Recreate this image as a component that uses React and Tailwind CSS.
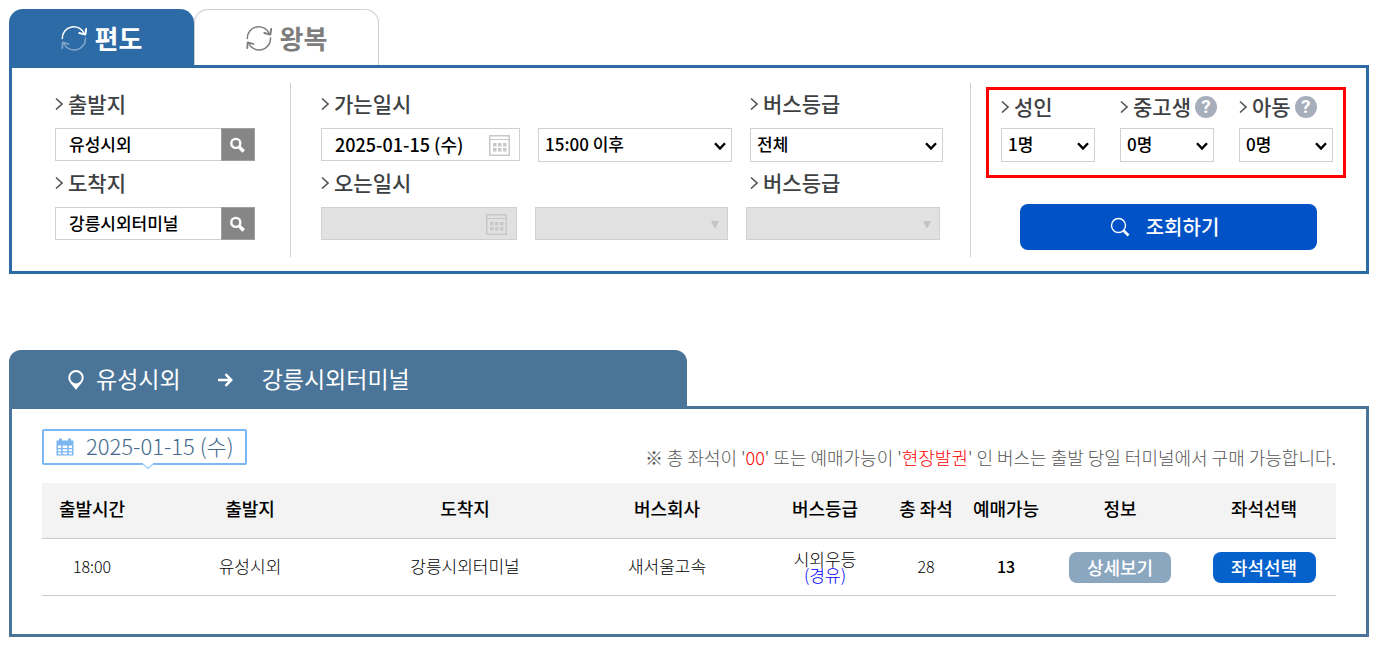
import React from "react";

const FONT = "font-['Noto_Sans_CJK_KR','Noto_Sans',sans-serif]";

function RoundTripIcon({ lowerOpacity }) {
  return (
    <svg width="26" height="26" viewBox="0 0 26 26" fill="none" stroke="currentColor" strokeLinecap="round" strokeLinejoin="round" aria-hidden="true">
      <path d="M1.3 13.500A11.500 11.500 0 0 1 23.500 9" strokeWidth="1.5" />
      <path d="M18.300 8 24.300 9.600 25.200 4" strokeWidth="2" />
      <g opacity={lowerOpacity}>
        <path d="M24.500 13A11.400 11.400 0 0 1 2.500 17.800" strokeWidth="1.5" />
        <path d="M7.600 19 1.700 17.300 1.300 23" strokeWidth="1.8" />
      </g>
    </svg>
  );
}

function Heading({ children, htmlFor }) {
  return (
    <label htmlFor={htmlFor} className="flex h-6 items-center gap-[5px] pb-[2px] text-[21px] leading-6 font-medium whitespace-nowrap text-[#3e4143]">
      <svg width="8" height="14" viewBox="0 0 8 14" fill="none" stroke="#555" strokeWidth="1.6" aria-hidden="true">
        <path d="M1 2.500 7 8 1 13.500" />
      </svg>
      {children}
    </label>
  );
}

function PlaceField({ id, label, value }) {
  return (
    <div className="flex flex-col gap-3">
      <Heading htmlFor={id}>{label}</Heading>
      <div className="flex h-[33px]">
        <input id={id} type="text" defaultValue={value} className="w-[166px] border border-r-0 border-[#d0d0d0] bg-white pb-[2px] pl-[13px] text-[17px] leading-6 font-medium text-black" />
        <button type="button" aria-label={`${label} 검색`} className="flex flex-1 items-center justify-center border border-[#a0a0a0] bg-[#868686]">
          <svg width="18" height="18" viewBox="0 0 18 18" fill="none" stroke="#fff" aria-hidden="true">
            <circle cx="6.800" cy="7.400" r="4.5" strokeWidth="2.4" />
            <path d="m10.500 11.200 4.2 4.2" strokeWidth="3.6" />
          </svg>
        </button>
      </div>
    </div>
  );
}

function CalendarIcon() {
  return (
    <svg width="21" height="21" viewBox="0 0 21 21" fill="none" stroke="#c8c8c8" aria-hidden="true">
      <rect x=".75" y=".75" width="19.5" height="19.5" strokeWidth="1.5" />
      <path d="M1 4.5h19" />
      <g fill="#c8c8c8" stroke="none">
        <path d="M4 8h3.500v3.500H4zM9 8h3.500v3.500H9zM14 8h3.500v3.500H14zM4 13h3.500v3.500H4zM9 13h3.500v3.500H9zM14 13h3.500v3.500H14z" />
      </g>
    </svg>
  );
}

function DateField({ id, value, disabled, box }) {
  return (
    <div className={`flex h-[33px] items-center border border-[#d0d0d0] ${box}`}>
      <input id={id} type="text" defaultValue={value} disabled={disabled} className="h-full min-w-0 flex-1 bg-transparent pb-[2px] pl-[13px] text-[18px] leading-6 font-medium text-black" />
      <button type="button" aria-label="달력 열기" disabled={disabled} className="pt-[2px] pr-[9px]">
        <CalendarIcon />
      </button>
    </div>
  );
}

function Select({ id, label, options, box }) {
  return (
    <div className={`relative flex h-[34px] ${box}`}>
      <select id={id} aria-label={label} className="w-full appearance-none border border-[#d0d0d0] bg-white pr-6 pb-[2px] pl-[6px] text-[17px] leading-6 font-medium text-black">
        {options.map((o) => (
          <option key={o}>{o}</option>
        ))}
      </select>
      <svg className="pointer-events-none absolute top-[14px] right-[6px]" width="12" height="9" viewBox="0 0 12 9" fill="none" stroke="#000" strokeWidth="2.400" aria-hidden="true">
        <path d="M1 1.200 6 6.500l5-5.300" />
      </svg>
    </div>
  );
}

function DisabledSelect({ id, label, box }) {
  return (
    <div className={`relative flex h-[33px] ${box}`}>
      <select id={id} aria-label={label} disabled className="w-full appearance-none border border-[#d0d0d0] bg-[#e1e1e1] opacity-100" />
      <svg className="pointer-events-none absolute top-[14px] right-[9px]" width="8" height="7" viewBox="0 0 8 7" aria-hidden="true">
        <path d="M0 0h8L4.500 7h-1z" fill="#c4c4c4" />
      </svg>
    </div>
  );
}

function Passenger({ id, label, value, help }) {
  return (
    <div className="flex w-[94px] flex-col gap-[9px]">
      <div className="flex items-center gap-1">
        <Heading htmlFor={id}>{label}</Heading>
        {help && (
          <button type="button" aria-label={`${label} 안내`} className="flex size-[22px] shrink-0 items-center justify-center rounded-full bg-[#a6aebc] font-['Roboto',sans-serif] text-[19px] leading-[22px] font-bold text-white">
            ?
          </button>
        )}
      </div>
      <Select id={id} options={[value]} box="w-full" />
    </div>
  );
}

function SearchPanel() {
  return (
    <section>
      <div className="flex text-[26px] leading-8 font-bold">
        <button type="button" className="flex h-14 w-[185px] items-center justify-center gap-2 rounded-t-[14px] bg-[#2d6ba7] pt-[2px] text-white">
          <RoundTripIcon lowerOpacity="0.4" />
          편도
        </button>
        <button type="button" className="flex h-14 w-[185px] items-center justify-center gap-2 rounded-t-[14px] border border-b-0 border-[#cfcfcf] bg-white pt-px text-[#7d7d7d]">
          <RoundTripIcon lowerOpacity="1" />
          왕복
        </button>
      </div>
      <form className="flex border-[3px] border-[#2d6ba7] pt-[15px] pb-[14px]">
        <div className="flex w-[279px] shrink-0 flex-col gap-[10px] border-r border-[#d0d0d0] pt-[9px] pr-[35px] pb-[17px] pl-[43px]">
          <PlaceField id="from" label="출발지" value="유성시외" />
          <PlaceField id="to" label="도착지" value="강릉시외터미널" />
        </div>
        <div className="flex w-[680px] shrink-0 flex-col border-r border-[#d0d0d0] pt-[9px] pl-[30px]">
          <div className="flex">
            <div className="w-[429px]"><Heading htmlFor="go-date">가는일시</Heading></div>
            <Heading htmlFor="go-grade">버스등급</Heading>
          </div>
          <div className="mt-3 flex gap-[18px]">
            <DateField id="go-date" value="2025-01-15 (수)" box="w-[199px] bg-white" />
            <Select id="go-time" label="출발 시간" options={["15:00 이후"]} box="w-[194px]" />
            <Select id="go-grade" options={["전체"]} box="w-[193px]" />
          </div>
          <div className="mt-[9px] flex">
            <div className="w-[429px]"><Heading htmlFor="back-date">오는일시</Heading></div>
            <Heading htmlFor="back-grade">버스등급</Heading>
          </div>
          <div className="mt-3 flex gap-[18px]">
            <DateField id="back-date" value="" disabled box="w-[196px] bg-[#e1e1e1]" />
            <DisabledSelect id="back-time" label="오는 시간" box="w-[193px]" />
            <DisabledSelect id="back-grade" label="오는 버스등급" box="w-[194px]" />
          </div>
        </div>
        <div className="flex min-w-0 flex-1 flex-col gap-[26px] pt-1 pr-5 pl-[15px]">
          <div className="flex gap-[25px] border-[3px] border-[#fe0000] pt-[5px] pr-[10px] pb-[13px] pl-3">
            <Passenger id="adult" label="성인" value="1명" />
            <Passenger id="teen" label="중고생" value="0명" help />
            <Passenger id="child" label="아동" value="0명" help />
          </div>
          <button type="button" className="mr-[29px] ml-[34px] flex h-[46px] items-center justify-center gap-4 rounded-lg bg-[#0052c6] pr-2 text-[20px] leading-6 font-medium text-white">
            <svg width="20" height="20" viewBox="0 0 20 20" fill="none" stroke="#fff" aria-hidden="true">
              <circle cx="8.500" cy="8.500" r="7" strokeWidth="1.400" />
              <path d="m13.500 13.500 5 5" strokeWidth="2.600" />
            </svg>
            조회하기
          </button>
        </div>
      </form>
    </section>
  );
}

const trips = [
  { time: "18:00", from: "유성시외", to: "강릉시외터미널", company: "새서울고속", grade: "시외우등", via: "(경유)", seats: 28, left: 13 },
];

function Results() {
  return (
    <section className="mt-[76px]">
      <h2 className="flex h-14 w-[calc(50%-2px)] items-center rounded-t-[12px] bg-[#4a7498] pl-[59px] text-[23px] leading-8 font-normal text-white">
        <svg className="mt-1" width="16" height="20" viewBox="0 0 16 20" aria-hidden="true">
          <path fill="#fff" fillRule="evenodd" d="M8 0a7.700 7.700 0 0 0-7.700 7.700C.3 12 5.500 16 8 20c2.500-4 7.700-8 7.700-12.300A7.700 7.700 0 0 0 8 0Zm0 2a5.700 5.700 0 1 1 0 11.400A5.700 5.700 0 0 1 8 2Z" />
        </svg>
        <span className="pl-3">유성시외</span>
        <svg className="mt-1 mr-[29px] ml-[37px]" width="15" height="14" viewBox="0 0 15 14" fill="none" stroke="#fff" strokeWidth="2.500" aria-hidden="true">
          <path d="M0 7h13M7.500 1.200 13.200 7l-5.700 5.800" />
        </svg>
        <span>강릉시외터미널</span>
      </h2>
      <div className="border-[3px] border-[#4a7498] px-[30px] pt-5 pb-[38px]">
        <div className="flex items-start justify-between">
          <div className="relative flex h-9 w-[205px] items-center gap-3 rounded-[2px] border-2 border-[#7cb7f7] pl-3 text-[22px] leading-6 font-light whitespace-nowrap text-[#43698c]">
            <svg width="18" height="18" viewBox="0 0 18 18" aria-hidden="true">
              <path fill="#7cb7f2" fillRule="evenodd" d="M.5 2.500H3V.5h3v2h6v-2h3v2h2.500v15H.5zM2 7.500V10h3.200V7.500zm4.700 0V10h4.500V7.500zm6 0V10H16V7.500zM2 11.200v2h3.200v-2zm4.700 0v2h4.500v-2zm6 0v2H16v-2zM2 14.400v1.800h3.200v-1.800zm4.700 0v1.800h4.500v-1.800zm6 0v1.800H16v-1.800z" />
            </svg>
            <span className="pb-1">2025-01-15 (수)</span>
            <svg className="absolute top-[32px] left-[99px]" width="10" height="7" viewBox="0 0 10 7" aria-hidden="true">
              <path d="M0 0h10v1L5 6 0 1z" fill="#fff" />
              <path d="M.5 1.500 5 5.500l4.500-4" fill="none" stroke="#a5cef8" strokeWidth="1.500" />
            </svg>
          </div>
          <p className="pt-4 text-[18px] leading-6 font-light whitespace-nowrap text-[#555]">
            ※ 총 좌석이 '<span className="text-[#fe0000]">00</span>' 또는 예매가능이 '<span className="text-[#fe0000]">현장발권</span>' 인 버스는 출발 당일 터미널에서 구매 가능합니다.
          </p>
        </div>
        <table className="mt-[14px] w-full table-fixed border-collapse text-center text-black">
          <colgroup>
            <col className="w-[100px]" />
            <col className="w-[216px]" />
            <col className="w-[214px]" />
            <col className="w-[190px]" />
            <col className="w-[126px]" />
            <col className="w-[76px]" />
            <col className="w-[84px]" />
            <col className="w-[144px]" />
            <col className="w-[144px]" />
          </colgroup>
          <thead>
            <tr className="h-[55px] border-b border-[#ccc] bg-[#f3f3f3] text-[18px] leading-6 whitespace-nowrap">
              {["출발시간", "출발지", "도착지", "버스회사", "버스등급", "총 좌석", "예매가능", "정보", "좌석선택"].map((h) => (
                <th key={h} className="p-0 pb-1 font-medium">{h}</th>
              ))}
            </tr>
          </thead>
          <tbody>
            {trips.map((t) => (
              <tr key={t.time} className="h-[57px] border-b border-[#ccc] text-[17px] leading-6 font-light">
                <td className="pb-[2px] text-[16px]">{t.time}</td>
                <td className="pb-[2px]">{t.from}</td>
                <td className="pb-[2px]">{t.to}</td>
                <td className="pb-[2px]">{t.company}</td>
                <td className="leading-4">
                  {t.grade}
                  <br />
                  <span className="text-[#0000fe]">{t.via}</span>
                </td>
                <td className="pb-[2px] text-[16px]">{t.seats}</td>
                <td className="pb-[2px] text-[16px] font-medium">{t.left}</td>
                <td className="pt-[2px]">
                  <button type="button" className="h-[31px] w-[102px] rounded-lg bg-[#8ba6bf] pb-[2px] text-[18px] leading-6 font-medium text-white">상세보기</button>
                </td>
                <td className="pt-[2px]">
                  <button type="button" className="h-[31px] w-[103px] rounded-lg bg-[#0562cc] pb-[2px] text-[18px] leading-6 font-medium text-white">좌석선택</button>
                </td>
              </tr>
            ))}
          </tbody>
        </table>
      </div>
    </section>
  );
}

export default function App() {
  return (
    <main className={`min-w-[1360px] bg-white pt-[9px] pr-[14px] pb-[15px] pl-[9px] ${FONT}`}>
      <SearchPanel />
      <Results />
    </main>
  );
}
